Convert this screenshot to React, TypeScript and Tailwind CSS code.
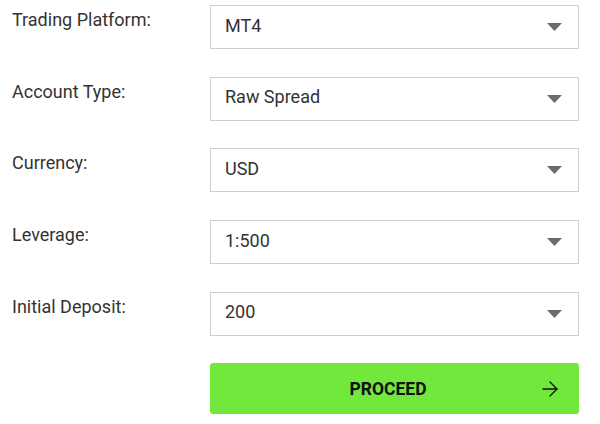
import { ArrowRight } from 'lucide-react'

const FIELDS = [
  { label: 'Trading Platform:', value: 'MT4' },
  { label: 'Account Type:', value: 'Raw Spread' },
  { label: 'Currency:', value: 'USD' },
  { label: 'Leverage:', value: '1:500' },
  { label: 'Initial Deposit:', value: '200' },
]

function Caret() {
  return (
    <svg width="15" height="8" viewBox="0 0 15 8" className="shrink-0">
      <path d="M0 0 H15 L7.5 8 Z" fill="#6b6b6b" />
    </svg>
  )
}

export default function App() {
  return (
    <div
      className="w-[600px] h-[424px] bg-white pl-[12px] pt-[5px] text-[#333]"
      style={{ fontFamily: 'Roboto, "Liberation Sans", sans-serif' }}
    >
      <div className="flex flex-col gap-[27.7px]">
        {FIELDS.map((f) => (
          <div key={f.label} className="flex">
            <div className="w-[198px] pt-[3px] text-[18px] leading-[24px]">{f.label}</div>
            <div className="w-[369px] h-[44px] border border-[#cfcfcf] flex items-center justify-between pl-[14px] pr-[16px] text-[18px]">
              <span className="pb-[4px]">{f.value}</span>
              <Caret />
            </div>
          </div>
        ))}
        <div className="flex">
          <div className="w-[198px]" />
          <button className="w-[369px] h-[51px] rounded-[3px] bg-[#72e83c] flex items-center pl-[20px] pr-[17px] text-[#111]">
            <span className="flex-1 text-center font-bold text-[17.5px] pl-[8px]">PROCEED</span>
            <ArrowRight size={24} strokeWidth={1.3} />
          </button>
        </div>
      </div>
    </div>
  )
}
